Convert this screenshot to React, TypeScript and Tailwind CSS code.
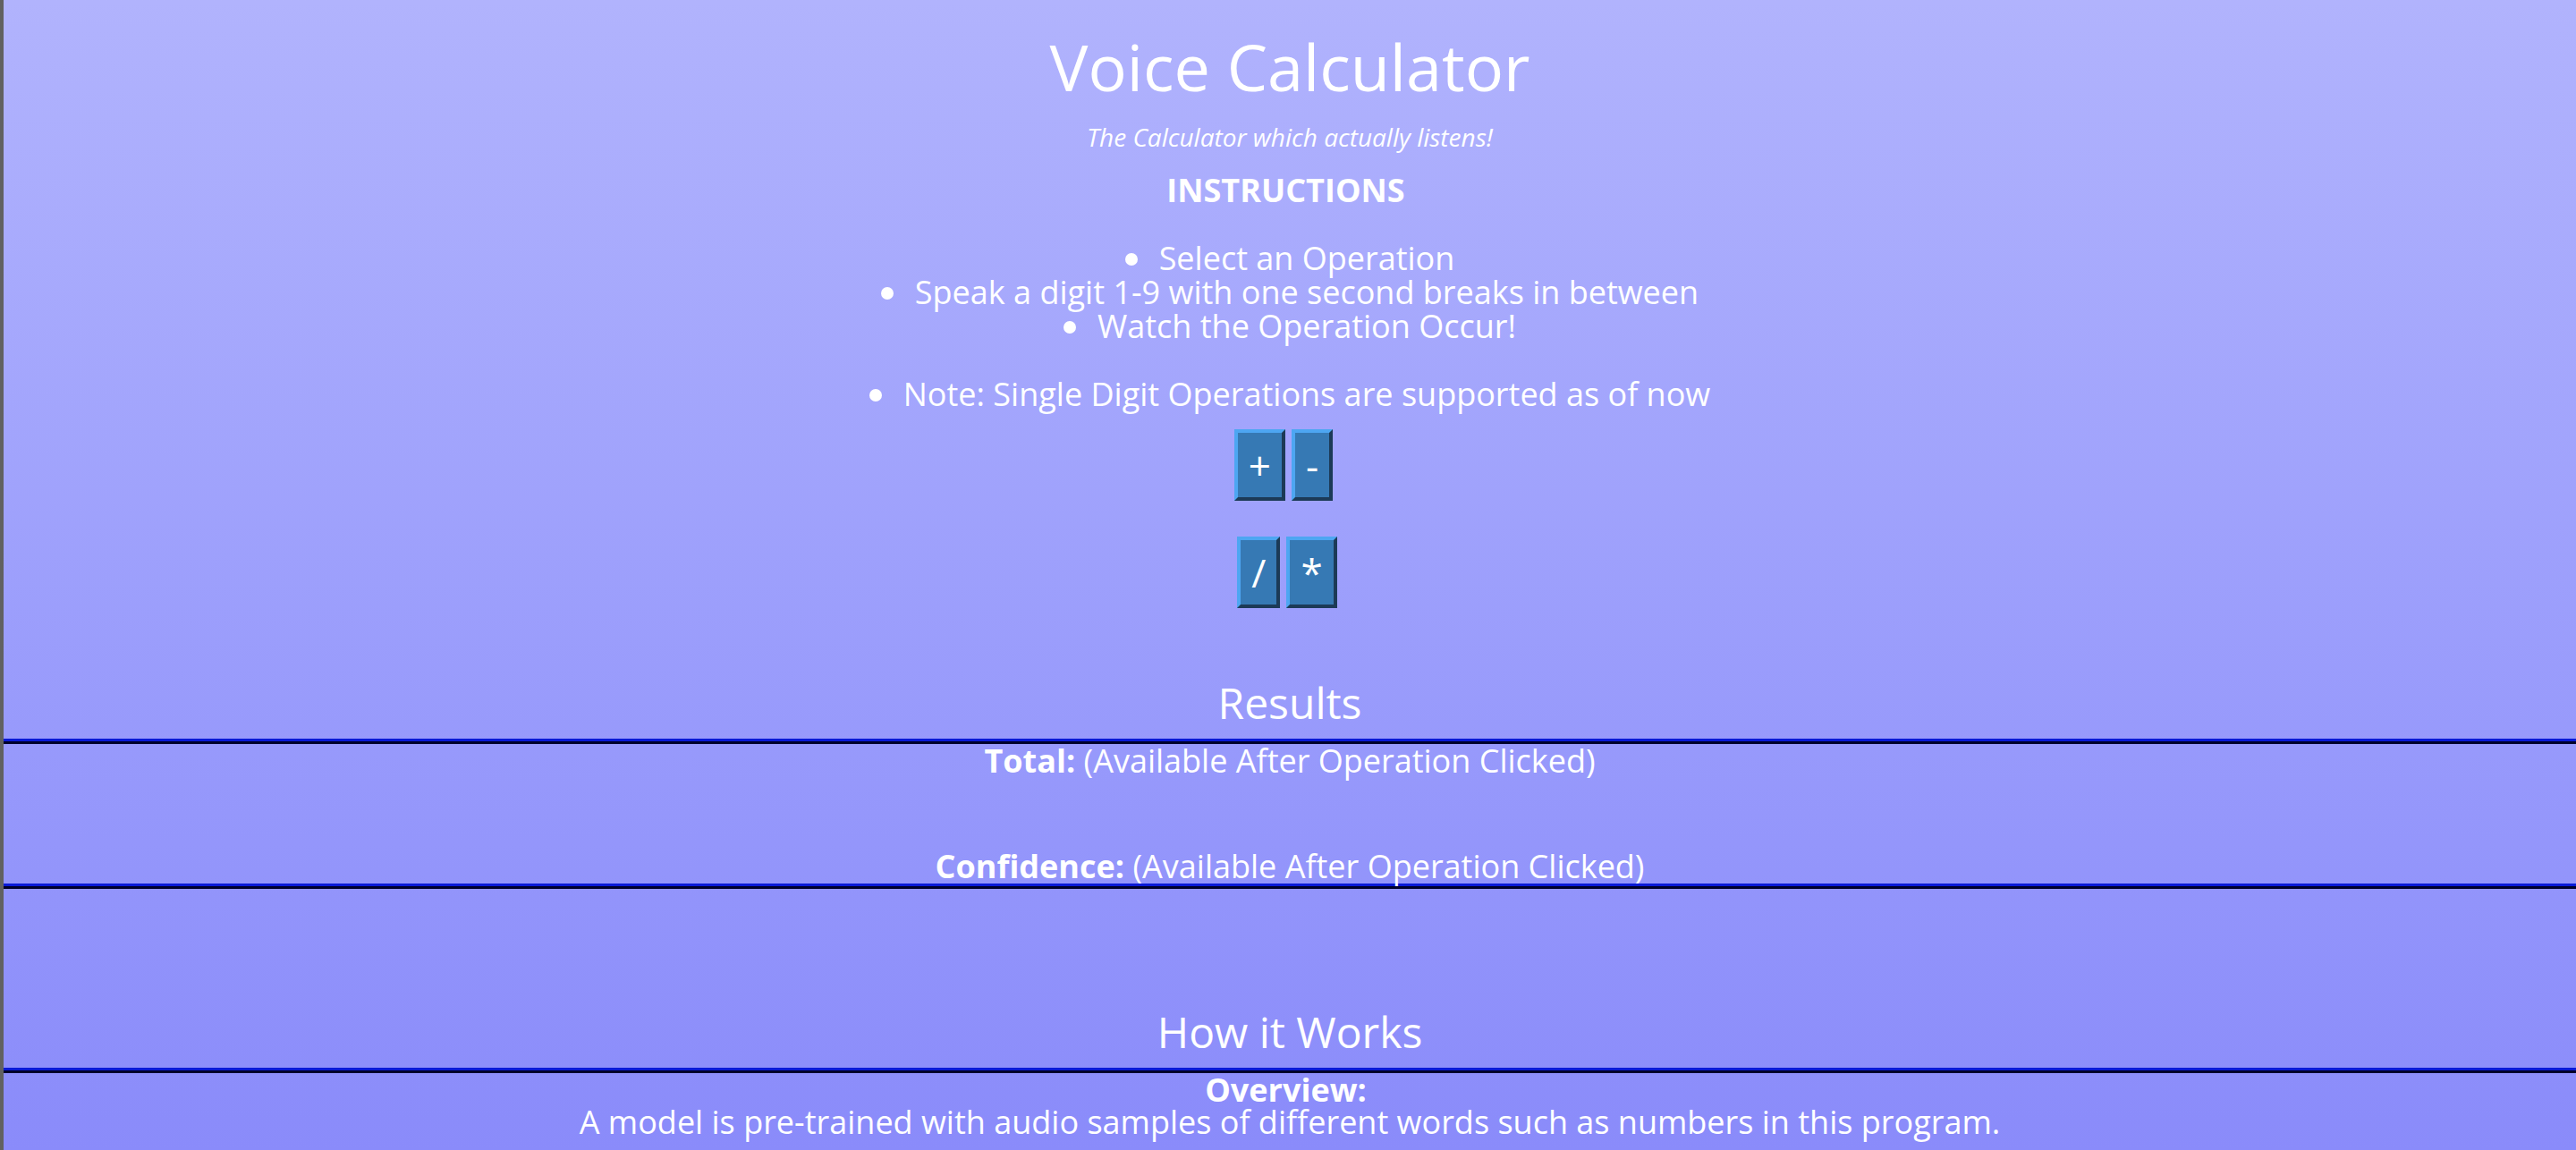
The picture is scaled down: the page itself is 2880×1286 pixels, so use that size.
import { ReactNode } from 'react'

const ops = [['+', '-'], ['/', '*']]

const steps = [
  'Select an Operation',
  'Speak a digit 1-9 with one second breaks in between',
  'Watch the Operation Occur!',
]

function OpButton({ label }: { label: string }) {
  return (
    <button className="flex h-[80px] items-center justify-center border-4 border-t-[#4da6f2] border-l-[#4da6f2] border-r-[#1c3a57] border-b-[#1c3a57] bg-[#3679b4] px-[12px] text-[44px] leading-none text-white">
      {label}
    </button>
  )
}

function Divider({ className = '' }: { className?: string }) {
  return <div className={`h-[6px] border-t-[3px] border-b-[3px] border-t-[#0a1ad6] border-b-[#00002b] ${className}`} />
}

function Line({ label, children, className = '' }: { label?: string; children?: ReactNode; className?: string }) {
  return (
    <p className={`text-[36px] leading-[36px] ${className}`}>
      {label && <b className="font-bold">{label}</b>}
      {children && <> {children}</>}
    </p>
  )
}

function Bullet({ children, className = '' }: { children: ReactNode; className?: string }) {
  return (
    <li className={className}>
      <span className="mr-[24px] mb-[5px] inline-block h-[14px] w-[14px] rounded-full bg-white" />
      {children}
    </li>
  )
}

export default function App() {
  return (
    <div className="min-h-screen border-l-4 border-[#616161] bg-linear-to-b from-[#b1b3fd] to-[#8a8bfa] text-center font-['Open_Sans',sans-serif] text-white">
      {/* Header */}
      <h1 className="pt-[38px] text-[72px] leading-[72px] font-normal">Voice Calculator</h1>
      <p className="mt-[24px] text-[28px] leading-[38px] italic">The Calculator which actually listens!</p>
      <h2 className="mt-[22px] pr-[9px] text-[36px] leading-[38px] font-bold">INSTRUCTIONS</h2>

      {/* Instructions */}
      <ul className="mt-[38px] list-none text-[36px] leading-[38px]">
        {steps.map((s) => (
          <Bullet key={s}>{s}</Bullet>
        ))}
        <Bullet className="mt-[38px]">Note: Single Digit Operations are supported as of now</Bullet>
      </ul>

      {/* Operations */}
      <div className="mt-[20px] flex flex-col items-center gap-[40px]">
        {ops.map((row, i) => (
          <div key={i} className={`flex gap-[7px] ${i === 0 ? 'pr-[14px]' : 'pr-[6px]'}`}>
            {row.map((op) => (
              <OpButton key={op} label={op} />
            ))}
          </div>
        ))}
      </div>

      {/* Results */}
      <h2 className="mt-[78px] text-[48px] leading-[56px]">Results</h2>
      <Divider className="mt-[12px]" />
      <Line label="Total:" className="mt-[1px]">(Available After Operation Clicked)</Line>
      <Line label="Confidence:" className="mt-[82px]">(Available After Operation Clicked)</Line>
      <Divider className="mt-[1px]" />

      {/* How it works */}
      <h2 className="mt-[132px] text-[48px] leading-[56px]">How it Works</h2>
      <Divider className="mt-[12px]" />
      <Line label="Overview:" className="mt-[1px] pr-[9px]" />
      <Line>A model is pre-trained with audio samples of different words such as numbers in this program.</Line>
    </div>
  )
}
